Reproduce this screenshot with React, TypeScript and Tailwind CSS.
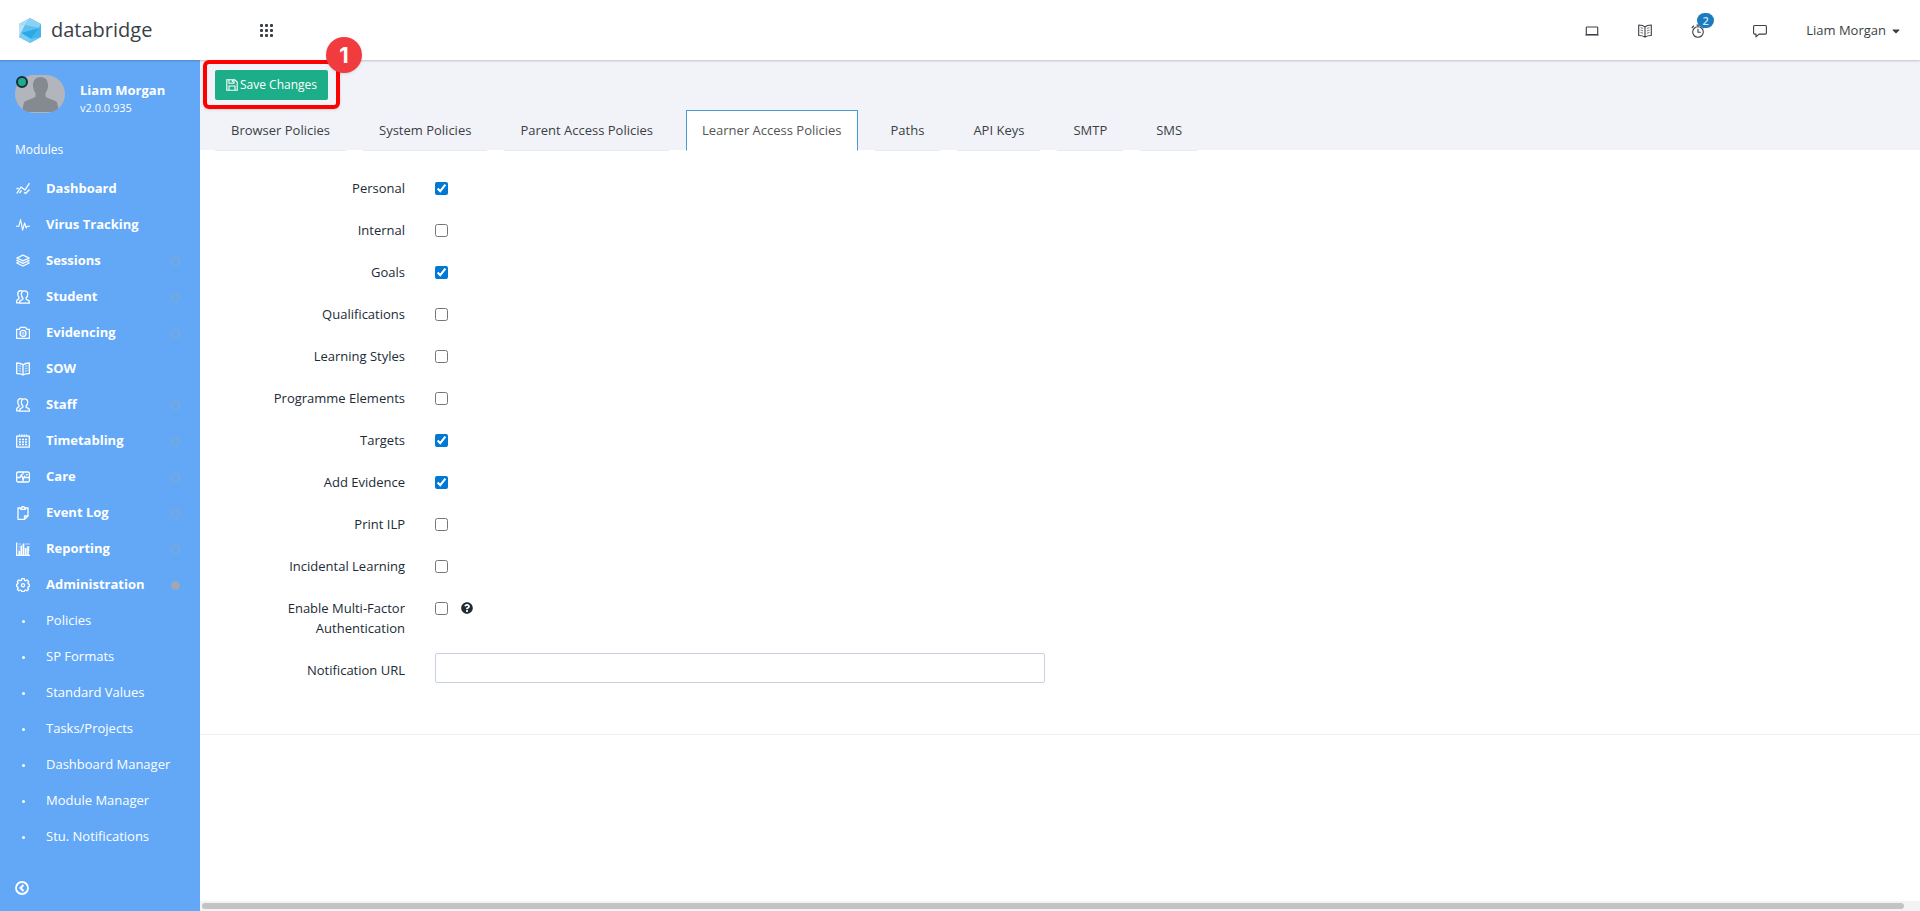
import React, { useState } from 'react';
import { FaQuestionCircle, FaCaretDown } from 'react-icons/fa';

type IconName =
  | 'graph'
  | 'pulse'
  | 'layers'
  | 'users'
  | 'camera'
  | 'book'
  | 'calendar'
  | 'care'
  | 'clipboard'
  | 'report'
  | 'gear'
  | 'laptop'
  | 'alarm'
  | 'chat';

interface ModuleItem {
  label: string;
  icon: IconName;
  marker?: 'open' | 'filled';
}

interface Policy {
  id: string;
  label: string;
  checked: boolean;
  help?: boolean;
}

const MODULES: ModuleItem[] = [
  { label: 'Dashboard', icon: 'graph' },
  { label: 'Virus Tracking', icon: 'pulse' },
  { label: 'Sessions', icon: 'layers', marker: 'open' },
  { label: 'Student', icon: 'users', marker: 'open' },
  { label: 'Evidencing', icon: 'camera', marker: 'open' },
  { label: 'SOW', icon: 'book' },
  { label: 'Staff', icon: 'users', marker: 'open' },
  { label: 'Timetabling', icon: 'calendar', marker: 'open' },
  { label: 'Care', icon: 'care', marker: 'open' },
  { label: 'Event Log', icon: 'clipboard', marker: 'open' },
  { label: 'Reporting', icon: 'report', marker: 'open' },
  { label: 'Administration', icon: 'gear', marker: 'filled' },
];

const ADMIN_LINKS = [
  'Policies',
  'SP Formats',
  'Standard Values',
  'Tasks/Projects',
  'Dashboard Manager',
  'Module Manager',
  'Stu. Notifications',
];

const TABS = [
  'Browser Policies',
  'System Policies',
  'Parent Access Policies',
  'Learner Access Policies',
  'Paths',
  'API Keys',
  'SMTP',
  'SMS',
];

const POLICIES: Policy[] = [
  { id: 'personal', label: 'Personal', checked: true },
  { id: 'internal', label: 'Internal', checked: false },
  { id: 'goals', label: 'Goals', checked: true },
  { id: 'qualifications', label: 'Qualifications', checked: false },
  { id: 'learning-styles', label: 'Learning Styles', checked: false },
  { id: 'programme-elements', label: 'Programme Elements', checked: false },
  { id: 'targets', label: 'Targets', checked: true },
  { id: 'add-evidence', label: 'Add Evidence', checked: true },
  { id: 'print-ilp', label: 'Print ILP', checked: false },
  { id: 'incidental-learning', label: 'Incidental Learning', checked: false },
  { id: 'mfa', label: 'Enable Multi-Factor Authentication', checked: false, help: true },
];

const ICONS: Record<IconName, React.ReactNode> = {
  graph: (
    <>
      <path d="M.7 11.500 5 5l4 3L13.500 1.200" />
      <path d="M.5 6.500h2.200M3.500 11 5.500 8.500M8 10.200l1.600 1.300 3.900-4" />
    </>
  ),
  pulse: <path d="M0 8.300h2.800L4.600 1.500l2 10.700L8.600 5l1.600 5 1-1.700H14" strokeWidth="1.100" />,
  layers: (
    <>
      <path d="M7 1.200 13.200 4 7 6.800.8 4z" />
      <path d="M2.300 5.700.8 6.500 7 9.400l6.200-2.900-1.500-.8M2.300 8.200.8 9 7 12l6.200-3-1.500-.8" />
    </>
  ),
  users: (
    <>
      <path d="M8.500.9c2 0 3.200 1.500 3.200 3.400 0 1.700-.7 3-1.600 3.800v1.200l3 1.600.4 2.300H3.600L4 10.900l2.900-1.600V8.100C6 7.300 5.300 6 5.300 4.300 5.300 2.400 6.500.9 8.500.9z" />
      <path d="M6.300 1.200C5.700.7 5 .5 4.500.6c-1.800.1-2.700 1.600-2.700 3.300 0 1.500.5 2.600 1.200 3.300v1.300L.9 10.200.5 12.800h2.700" />
    </>
  ),
  camera: (
    <>
      <path d="M.6 3.300h2.600l1.300-2h5l1.300 2h2.600v9H.6z" />
      <circle cx="7" cy="7.400" r="3" />
      <circle cx="7" cy="7.400" r="1" strokeWidth=".7" />
    </>
  ),
  book: (
    <>
      <path d="M7 2.800C5.500 1.500 3.500 1 .7 1v10.500c2.800 0 4.800.5 6.300 1.600 1.500-1.100 3.500-1.600 6.300-1.600V1C10.500 1 8.500 1.500 7 2.800zM7 2.800v10" />
      <path
        d="M2.500 3.600l2.600.9M2.500 6l2.600.9M2.500 8.400l2.600.9M11.500 3.600l-2.600.9M11.500 6l-2.600.9M11.500 8.400l-2.600.9"
        strokeWidth=".7"
      />
    </>
  ),
  calendar: (
    <>
      <path d="M.7 2.200h12.600v11H.7zM3.500.4v2.400M5.800.4v2.400M8.200.4v2.400M10.500.4v2.400" />
      <path d="M3 5.500h8M3 8h8M3 10.500h8" strokeWidth="1.400" strokeDasharray="2 1" />
    </>
  ),
  care: (
    <>
      <rect x=".6" y="2" width="12.800" height="10" rx="1.600" />
      <path d="M.6 7.500h3.500l1.300-3 1.800 5.200 1.300-3.500.8 1.300h4.100M7 2v2.500M7 9.700V12" />
      <path d="M10 4.600h1.800" />
    </>
  ),
  clipboard: (
    <>
      <path d="M4.500 2H2v11.300h6.500L12 10V2H9.500" />
      <path d="M4.700 1.800h1L6 .7h2l.3 1.100h1v1.500H4.700zM8.500 13.300V10H12" />
    </>
  ),
  report: (
    <>
      <path d="M.6.500v12.900H14" />
      <path d="M3.300 13V9M5.300 13V3.500M7.500 13V1.500M9.700 13V6M12 13V4.500" strokeWidth="1.700" />
      <path d="M2 2h3M9 2h5M2 5h2M10.500 5H14M2 8h2M10.500 8H14" strokeWidth=".6" />
    </>
  ),
  gear: (
    <>
      <path d="M5.800.7h2.400l.3 1.600 1.200.5 1.400-.9 1.600 1.600-.9 1.300.5 1.200 1.300.3v2l-1.400.4-.5 1.200.9 1.400-1.600 1.500-1.400-.8-1.200.5-.3 1.200H5.800l-.3-1.200-1.200-.5-1.400.8-1.600-1.500.9-1.400-.5-1.200-1.200-.4v-2L1.700 6l.5-1.200-.9-1.300 1.600-1.600 1.400.9 1.200-.5z" />
      <circle cx="7" cy="7.300" r="1.600" />
    </>
  ),
  laptop: (
    <>
      <rect x="1.300" y="3" width="11.400" height="7.500" rx=".6" />
      <path d="M.3 11h13.400" />
    </>
  ),
  alarm: (
    <>
      <circle cx="7" cy="8" r="5.300" />
      <path d="M7 4.800v3.400h2.800M5.500 1h3M7 1v1.600M.8 4 3 1.700M13.200 4 11 1.700" />
    </>
  ),
  chat: <path d="M1.600 1.500h10.800c.6 0 1 .4 1 1v6.600c0 .6-.4 1-1 1H6L3 12.900v-2.800H1.600c-.6 0-1-.4-1-1V2.500c0-.6.4-1 1-1z" />,
};

const Icon: React.FC<{ name: IconName; bold?: boolean }> = ({ name, bold }) => (
  <svg
    viewBox="0 0 14 14"
    className="w-3.5 h-3.5 shrink-0"
    fill="none"
    stroke="currentColor"
    strokeWidth={bold ? 1.3 : 1.1}
    strokeLinejoin="round"
    aria-hidden="true"
  >
    {ICONS[name]}
  </svg>
);

const SaveIcon: React.FC = () => (
  <svg viewBox="0 0 12 12" className="w-3 h-3" fill="none" stroke="currentColor" strokeWidth="1.100" aria-hidden="true">
    <path d="M.8.8h8L11.200 3v8.200H.8z" />
    <path d="M3 .8v3.400h5V.8M3 11V7h6v4" />
    <path d="M6.500 1v2.200" strokeWidth="1.500" />
  </svg>
);

const Logo: React.FC = () => (
  <svg viewBox="0 0 22 25" className="w-[22px] h-[25px]" aria-hidden="true">
    <path d="M11 0 22 6v13l-11 6L0 19V6z" fill="#5cc1f0" />
    <path d="M11 0 0 6l6 1z" fill="#a5dcf7" />
    <path d="M11 0 6 7l14 3 2-4z" fill="#8bd1f5" />
    <path d="M0 6l6 1-4 9-2 3z" fill="#b5e2f9" />
    <path d="M6 7l14 3L2 15z" fill="#5fc0f0" />
    <path d="M2 15l18-5-8 11z" fill="#2ba9e8" />
    <path d="M20 10l2-4v13l-10 2z" fill="#45b4ec" />
    <path d="M2 15l10 6-1 4-11-6z" fill="#7ccbf3" />
    <path d="M12 21l10-2-11 6z" fill="#68c4f1" />
  </svg>
);

const Avatar: React.FC = () => (
  <div className="relative shrink-0">
    <svg viewBox="0 0 50 38" className="w-[50px] h-[38px] rounded-[19px]" role="img" aria-label="Liam Morgan">
      <rect width="50" height="38" fill="#b2b6bc" />
      <path
        d="M25.500 2c5 0 7.500 3.500 7.500 8.500 0 3-1 5.500-2.500 7.500v3c0 3 10.500 3.500 11.500 6.500 1 3 1.500 7 1.500 9.500h-36c0-2.500.5-6.500 1.500-9.500 1-3 11.500-3.500 11.500-6.500v-3C19 16 18 13.500 18 10.500c0-5 2.500-8.500 7.500-8.500z"
        fill="#858990"
      />
    </svg>
    <span className="absolute left-px top-px w-3 h-3 rounded-full bg-[#1cae88] border-2 border-[#1b2b3a]"></span>
  </div>
);

const Header: React.FC = () => (
  <header className="relative h-[60px] shrink-0 flex items-center bg-white shadow-[0_1px_2px_rgba(0,0,0,0.2)] text-[#3a3f45]">
    <a href="#home" className="w-[200px] flex items-center gap-2.5 pl-[19px] text-xl">
      <Logo />
      databridge
    </a>
    <button aria-label="Apps" className="ml-[60px]">
      <svg viewBox="0 0 13 13" className="w-[13px] h-[13px]" fill="currentColor" aria-hidden="true">
        {[0, 5, 10].map(y => [0, 5, 10].map(x => <rect key={`${x}-${y}`} x={x} y={y} width="3" height="3" rx="1" />))}
      </svg>
    </button>
    <div className="ml-auto flex items-center pt-0.5 pr-5">
      <button aria-label="Devices" className="mr-[39px]">
        <Icon name="laptop" />
      </button>
      <button aria-label="Library" className="mr-[39px]">
        <Icon name="book" />
      </button>
      <button aria-label="Reminders" className="relative mr-12">
        <Icon name="alarm" />
        <span className="absolute left-1.5 -top-[11px] w-[17px] h-[15px] rounded-full bg-[#1a7bbf] text-[11px] leading-[15px] font-semibold text-[#d3e6f3] text-center">
          2
        </span>
      </button>
      <button aria-label="Messages" className="mr-[39px]">
        <Icon name="chat" />
      </button>
      <button className="flex items-center gap-1.5">
        Liam Morgan
        <FaCaretDown className="w-2 h-3" />
      </button>
    </div>
  </header>
);

const Sidebar: React.FC = () => (
  <nav className="w-[200px] shrink-0 flex flex-col bg-[#62a8f7] text-white">
    <div className="flex gap-[15px] pl-[15px] pt-[15px]">
      <Avatar />
      <div className="pt-[5px]">
        <div className="font-bold leading-5">Liam Morgan</div>
        <div className="text-[11px] leading-4">v2.0.0.935</div>
      </div>
    </div>
    <h2 className="pl-[15px] mt-6 mb-[11px] text-xs leading-5">Modules</h2>
    <ul>
      {MODULES.map(item => (
        <li key={item.label}>
          <a href="#module" className="flex items-center h-9 pl-4 pr-5 font-bold">
            <Icon name={item.icon} bold />
            <span className="ml-4">{item.label}</span>
            {item.marker && (
              <span
                className={`ml-auto w-[9px] h-[9px] rounded-full border ${
                  item.marker === 'filled' ? 'bg-[#9fa8b3] border-[#9fa8b3]' : 'border-[#8fa6bf]'
                }`}
              ></span>
            )}
          </a>
        </li>
      ))}
      {ADMIN_LINKS.map(link => (
        <li key={link}>
          <a href="#admin" className="flex items-center h-9 pl-4">
            <span className="w-3.5 flex justify-center">
              <span className="w-[3px] h-[3px] rounded-full bg-white"></span>
            </span>
            <span className="ml-4">{link}</span>
          </a>
        </li>
      ))}
    </ul>
    <button aria-label="Collapse menu" className="mt-auto ml-[15px] mb-4 self-start">
      <svg viewBox="0 0 14 14" className="w-3.5 h-3.5" fill="none" stroke="currentColor" strokeWidth="2" aria-hidden="true">
        <circle cx="7" cy="7" r="6" strokeWidth="1.800" />
        <path d="M8.500 4 5.500 7l3 3" />
      </svg>
    </button>
  </nav>
);

const App: React.FC = () => {
  const [activeTab, setActiveTab] = useState<string>('Learner Access Policies');

  return (
    <div className="flex flex-col h-screen overflow-hidden bg-white text-[13px] text-[#212b36] font-['Open_Sans','Noto_Sans',sans-serif]">
      <Header />
      <div className="flex-1 min-h-0 flex">
        <Sidebar />
        <main className="flex-1 min-w-0 flex flex-col">
          <div className="bg-[#f2f3f8] pl-[15px] pt-2.5">
            <div className="relative w-fit">
              <button className="flex items-center justify-center gap-0.5 w-[113px] h-[30px] rounded-xs bg-[#1cae88] text-white text-xs">
                <SaveIcon />
                Save Changes
              </button>
              {/* Step callout */}
              <span className="absolute -inset-x-3 -top-2.5 -bottom-[9px] border-4 border-[#ff0000] rounded-md shadow pointer-events-none"></span>
              <span className="absolute -right-[34px] -top-[33px] w-9 h-9 rounded-full bg-[#f23b3e] shadow text-white text-[22px] leading-9 font-bold text-center font-['Inter','Liberation_Sans',sans-serif]">
                1
              </span>
            </div>
            {/* Tabs */}
            <div role="tablist" className="flex gap-[17px] mt-2.5 -mb-px">
              {TABS.map(tab => (
                <button
                  key={tab}
                  role="tab"
                  aria-selected={tab === activeTab}
                  onClick={() => setActiveTab(tab)}
                  className={`h-[41px] px-[15px] border whitespace-nowrap ${
                    tab === activeTab
                      ? 'bg-white border-[#4a9bd4] border-b-white text-[#555555]'
                      : 'bg-[#f2f3f8] border-transparent border-b-[#e7eaf0] text-[#3a3f45]'
                  }`}
                >
                  {tab}
                </button>
              ))}
            </div>
          </div>

          {/* Policy form */}
          <form className="pt-7 pb-[51px] border-b border-[#eeeff1]">
            <div className="flex flex-col gap-[22px] leading-5">
              {POLICIES.map(policy => (
                <div key={policy.id} className="flex">
                  <label htmlFor={policy.id} className="w-[205px] pl-10 shrink-0 text-right">
                    {policy.label}
                  </label>
                  <div className="flex items-center h-5 ml-[30px] gap-[13px]">
                    <input
                      id={policy.id}
                      type="checkbox"
                      defaultChecked={policy.checked}
                      className="w-[13px] h-[13px] accent-[#0078d4]"
                    />
                    {policy.help && <FaQuestionCircle className="w-3 h-3" />}
                  </div>
                </div>
              ))}
            </div>
            <div className="flex items-start mt-[15px] leading-5">
              <label htmlFor="notification-url" className="w-[205px] shrink-0 pt-[7px] text-right">
                Notification URL
              </label>
              <input
                id="notification-url"
                type="text"
                className="flex-1 max-w-[610px] h-[30px] ml-[30px] px-2 border border-[#c8d2de] rounded-xs bg-white"
              />
            </div>
          </form>

          <div className="mt-auto h-2.5 bg-[#f3f3f3] pl-0.5 pr-4 pt-0.5">
            <div className="h-1.5 rounded-full bg-[#c3c3c3]"></div>
          </div>
        </main>
      </div>
    </div>
  );
};

export default App;
